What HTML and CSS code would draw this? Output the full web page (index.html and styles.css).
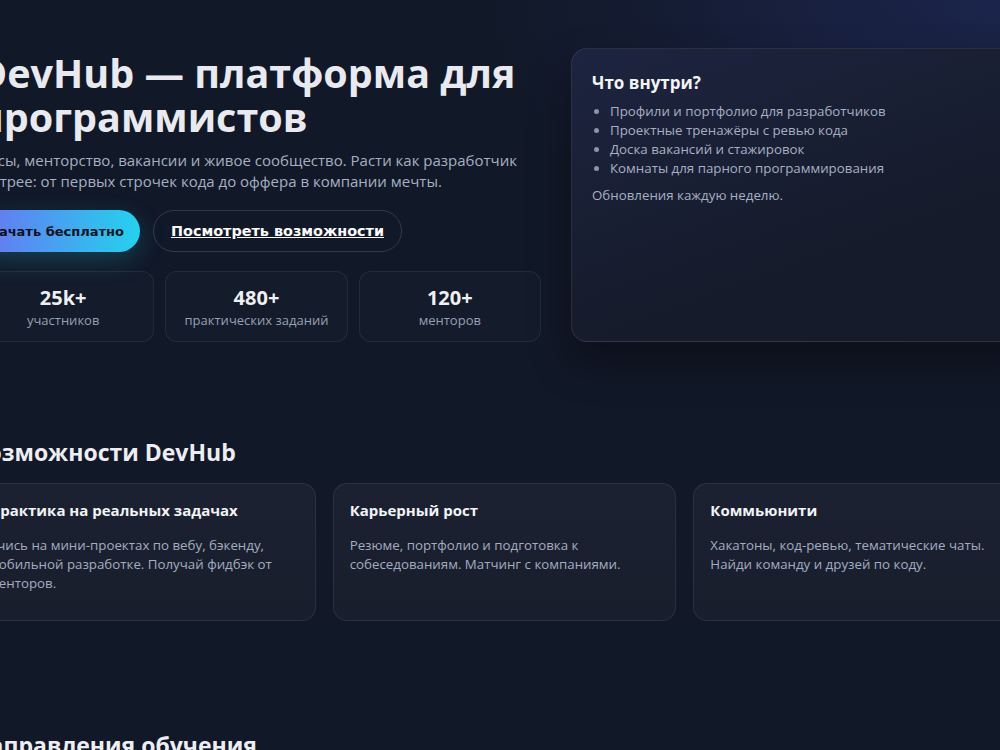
FILE: index.html
```html
<!DOCTYPE html>
<html lang="ru">
<head>
    <meta charset="UTF-8">
    <meta name="viewport" content="width=device-width, initial-scale=1.0">
    <title>DevHub — платформа для программистов</title>
    <link rel="stylesheet" href="styles.css">
</head>
<body>
    <main class="page">
        <section class="hero">
            <div class="hero-main">
                <h1>DevHub — платформа для программистов</h1>
                <p class="lead">Курсы, менторство, вакансии и живое сообщество. Расти как разработчик быстрее: от первых строчек кода до оффера в компании мечты.</p>
                <div class="actions">
                    <button class="btn btn-primary">Начать бесплатно</button>
                    <a class="btn btn-ghost" href="#features">Посмотреть возможности</a>
                </div>
                <div class="stats">
                    <div class="stat">
                        <div class="stat-num">25k+</div>
                        <div class="stat-label">участников</div>
                    </div>
                    <div class="stat">
                        <div class="stat-num">480+</div>
                        <div class="stat-label">практических заданий</div>
                    </div>
                    <div class="stat">
                        <div class="stat-num">120+</div>
                        <div class="stat-label">менторов</div>
                    </div>
                </div>
            </div>
            <aside class="inside-card">
                <h3>Что внутри?</h3>
                <ul>
                    <li>Профили и портфолио для разработчиков</li>
                    <li>Проектные тренажёры с ревью кода</li>
                    <li>Доска вакансий и стажировок</li>
                    <li>Комнаты для парного программирования</li>
                </ul>
                <p>Обновления каждую неделю.</p>
            </aside>
        </section>

        <section class="features" id="features">
            <h2>Возможности DevHub</h2>
            <div class="feature-grid">
                <div class="feature">
                    <h3>Практика на реальных задачах</h3>
                    <p>Учись на мини-проектах по вебу, бэкенду, мобильной разработке. Получай фидбэк от менторов.</p>
                </div>
                <div class="feature">
                    <h3>Карьерный рост</h3>
                    <p>Резюме, портфолио и подготовка к собеседованиям. Матчинг с компаниями.</p>
                </div>
                <div class="feature">
                    <h3>Коммьюнити</h3>
                    <p>Хакатоны, код-ревью, тематические чаты. Найди команду и друзей по коду.</p>
                </div>
            </div>
        </section>

        <section class="tracks">
            <h2>Направления обучения</h2>
        </section>
    </main>
</body>
</html>
```

FILE: styles.css
```css
body {
    margin: 0;
    font-family: "Open Sans", "Noto Sans", sans-serif;
    color: #e5e7eb;
    background-color: #111827;
    background-image: radial-gradient(ellipse 520px 300px at 100% 0%, rgba(40, 52, 120, 0.45), rgba(17, 24, 39, 0) 100%);
    overflow-x: hidden;
    min-height: 100vh;
}

/* the page is wider than the window and hangs off its left edge */
.page {
    width: 1065px;
    margin-left: -28px;
    padding-top: 48px;
}

.hero {
    display: grid;
    grid-template-columns: 569px 1fr;
    gap: 30px;
}

h1 {
    font-size: 39.5px;
    line-height: 44px;
    font-weight: 700;
    color: #e8eaf0;
    margin: 3px 0 11px 6px;
}

.lead {
    font-size: 15px;
    line-height: 21px;
    color: #a7b0c2;
    margin: 0 0 18px 0;
}

.actions {
    display: flex;
    gap: 13px;
    margin-bottom: 19px;
}

.btn {
    font-family: "DejaVu Sans", Verdana, sans-serif;
    font-size: 14.4px;
    font-weight: 700;
    height: 42px;
    padding: 0 17px;
    border-radius: 21px;
    display: flex;
    align-items: center;
    box-sizing: border-box;
}

.btn-primary {
    font-size: 13px;
    padding: 0 16px;
    border: none;
    color: #0b1220;
    background: linear-gradient(90deg, #6d6ff2, #22d3ee);
    box-shadow: 0 8px 26px rgba(34, 211, 238, 0.22);
}

.btn-ghost {
    color: #ffffff;
    text-decoration: underline;
    border: 1px solid rgba(255, 255, 255, 0.14);
    background: transparent;
}

.stats {
    display: grid;
    grid-template-columns: repeat(3, 1fr);
    gap: 11px;
}

.stat {
    border: 1px solid rgba(255, 255, 255, 0.07);
    border-radius: 12px;
    background: rgba(255, 255, 255, 0.015);
    padding: 13px 8px 12px;
    text-align: center;
}

.stat-num {
    font-size: 20px;
    line-height: 26px;
    font-weight: 700;
    color: #eef0f4;
}

.stat-label {
    font-size: 13px;
    line-height: 18px;
    color: #94a0b4;
}

.inside-card {
    border: 1px solid rgba(255, 255, 255, 0.09);
    border-radius: 16px;
    background: linear-gradient(160deg, #1d2440, #161c2c 60%, #151a29);
    box-shadow: 0 20px 40px rgba(0, 0, 0, 0.35);
    padding: 22px 20px;
}

.inside-card h3 {
    font-size: 17px;
    line-height: 24px;
    font-weight: 700;
    color: #f3f4f6;
    margin: 0 0 7px 0;
}

.inside-card ul {
    margin: 0 0 8px 0;
    padding-left: 18px;
    font-size: 13.3px;
    line-height: 19px;
    color: #a7b0c2;
}

.inside-card li::marker {
    color: #8b95a8;
}

.inside-card p {
    margin: 0;
    font-size: 13.3px;
    line-height: 19px;
    color: #a7b0c2;
}

.features {
    padding-top: 96px;
}

h2 {
    font-size: 23px;
    line-height: 28px;
    font-weight: 700;
    color: #eceef3;
    margin: 0 0 17px 0;
}

.feature-grid {
    display: grid;
    grid-template-columns: repeat(3, 1fr);
    gap: 17px;
}

.feature {
    border: 1px solid rgba(255, 255, 255, 0.08);
    border-radius: 14px;
    background: linear-gradient(180deg, #1c2131, #191e2d);
    padding: 16px 16px;
    min-height: 104px;
}

.feature h3 {
    font-size: 15px;
    line-height: 20px;
    font-weight: 700;
    color: #f1f3f7;
    margin: 0 0 16px 0;
}

.feature p {
    font-size: 13.3px;
    line-height: 19px;
    color: #a3adc0;
    margin: 0;
}

.tracks {
    padding-top: 110px;
}
```
